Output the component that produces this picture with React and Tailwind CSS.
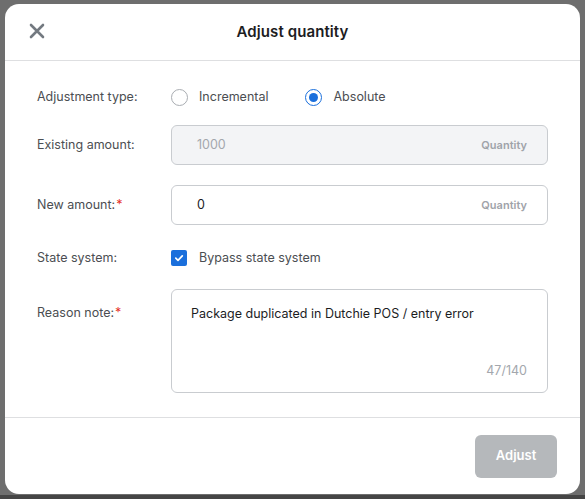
import React from "react";

export default function App() {
  const font = { fontFamily: "Inter, 'Noto Sans', sans-serif" };
  return (
    <div
      className="w-[585px] h-[499px] bg-[#6e6e6e] pl-[5px] pr-[5px] pt-[4px] overflow-hidden border-b-[4px] border-[#454545]"
      style={font}
    >
      <div className="w-[575px] h-[490px] bg-white rounded-[14px] flex flex-col">
        {/* Header */}
        <div className="h-[57px] border-b border-[#dedfe1] flex items-center relative shrink-0">
          <button className="absolute left-[20px] top-[15px] w-[24px] h-[24px] flex items-center justify-center">
            <svg width="16" height="16" viewBox="0 0 16 16" fill="none">
              <path d="M2 2L14 14M14 2L2 14" stroke="#737980" strokeWidth="2.6" strokeLinecap="round" />
            </svg>
          </button>
          <div className="w-full text-center text-[15px] font-semibold text-[#1c1d1f] tracking-[0.1px]">
            Adjust quantity
          </div>
        </div>

        {/* Body */}
        <div className="flex-1 px-[32px] pt-[26px] pb-[24px] flex flex-col border-b border-[#dedfe1]">
          {/* Adjustment type */}
          <div className="flex items-center h-[20px]">
            <div className="w-[134px] text-[12.5px] text-[#4b4e52]">Adjustment type:</div>
            <label className="flex items-center">
              <span className="w-[17px] h-[17px] rounded-full border border-[#a9adb2] bg-white" />
              <span className="ml-[11px] text-[12.5px] text-[#4b4e52]">Incremental</span>
            </label>
            <label className="flex items-center ml-[36px]">
              <span className="w-[17px] h-[17px] rounded-full border-[1.5px] border-[#1a6fdc] flex items-center justify-center">
                <span className="w-[9px] h-[9px] rounded-full bg-[#1a6fdc]" />
              </span>
              <span className="ml-[12px] text-[12.5px] text-[#4b4e52]">Absolute</span>
            </label>
          </div>

          {/* Existing amount */}
          <div className="flex items-center mt-[18px]">
            <div className="w-[134px] text-[12.5px] text-[#4b4e52]">Existing amount:</div>
            <div className="flex-1 h-[40px] rounded-[6px] border border-[#c9ccd0] bg-[#f3f4f6] flex items-center pl-[25px] pr-[20px]">
              <span className="flex-1 text-[12.5px] text-[#a3a7ad]">1000</span>
              <span className="text-[11px] font-semibold text-[#9fa3a9]">Quantity</span>
            </div>
          </div>

          {/* New amount */}
          <div className="flex items-center mt-[20px]">
            <div className="w-[134px] text-[12.5px] text-[#4b4e52]">
              New amount:<span className="text-[#e5332a] ml-[1px]">*</span>
            </div>
            <div className="flex-1 h-[40px] rounded-[6px] border border-[#c9ccd0] bg-white flex items-center pl-[25px] pr-[20px]">
              <span className="flex-1 text-[12.5px] text-[#1c1d1f]">0</span>
              <span className="text-[11px] font-semibold text-[#9fa3a9]">Quantity</span>
            </div>
          </div>

          {/* State system */}
          <div className="flex items-center h-[20px] mt-[23px]">
            <div className="w-[134px] text-[12.5px] text-[#4b4e52]">State system:</div>
            <span className="w-[16px] h-[16px] rounded-[2px] bg-[#1a6fdc] flex items-center justify-center">
              <svg width="10" height="10" viewBox="0 0 10 10" fill="none">
                <path d="M1.8 5.2L4 7.3L8.3 2.8" stroke="white" strokeWidth="1.7" strokeLinecap="round" strokeLinejoin="round" />
              </svg>
            </span>
            <span className="ml-[12px] text-[12.5px] text-[#4b4e52]">Bypass state system</span>
          </div>

          {/* Reason note */}
          <div className="flex items-start mt-[21px]">
            <div className="w-[134px] text-[12.5px] text-[#4b4e52] pt-[15px]">
              Reason note:<span className="text-[#e5332a] ml-[1px]">*</span>
            </div>
            <div className="flex-1 h-[104px] rounded-[6px] border border-[#c9ccd0] bg-white flex flex-col pl-[19px] pr-[20px] pt-[15px] pb-[11px]">
              <div className="flex-1 text-[12.5px] text-[#1c1d1f]">
                Package duplicated in Dutchie POS / entry error
              </div>
              <div className="text-right text-[12.5px] text-[#a3a7ad]">47/140</div>
            </div>
          </div>
        </div>

        {/* Footer */}
        <div className="h-[76px] flex items-center justify-end pr-[23px] shrink-0">
          <button className="w-[82px] h-[43px] rounded-[6px] bg-[#b5b8bb] text-white text-[13px] font-semibold">
            Adjust
          </button>
        </div>
      </div>
    </div>
  );
}
